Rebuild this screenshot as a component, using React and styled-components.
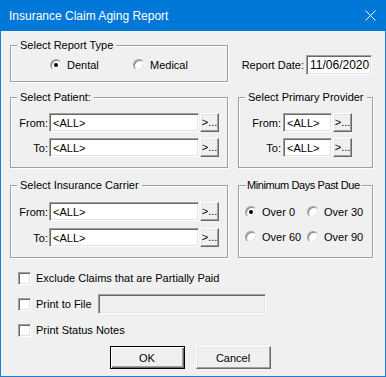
import React from "react";
import styled, { createGlobalStyle } from "styled-components";

const GlobalStyle = createGlobalStyle`
  html, body {
    margin: 0;
    padding: 0;
    background: #ffffff;
  }
  body {
    font-family: "Liberation Sans", Arial, sans-serif;
    font-size: 11px;
    color: #000;
  }
`;

const Window = styled.div`
  width: 386px;
  height: 377px;
  display: flex;
  flex-direction: column;
  overflow: hidden;
`;

const TitleBar = styled.div`
  height: 31px;
  flex: none;
  background: #0078d7;
  color: #fff;
  display: flex;
  align-items: center;
  justify-content: space-between;
  padding: 0 10px 0 9px;
  font-family: "Liberation Sans", Arial, sans-serif;
  font-size: 12px;
`;

const CloseIcon = () => (
  <svg width="11" height="11" viewBox="0 0 11 11">
    <path d="M0.5 0.5L10.5 10.5M10.5 0.5L0.5 10.5" stroke="#fff" strokeWidth="1" />
  </svg>
);

const Body = styled.div`
  flex: 1;
  background: #f0f0f0;
  border: 1px solid #1a7fd5;
  border-top: none;
  padding: 8px 12px 7px 9px;
  display: flex;
  flex-direction: column;
`;

const Row = styled.div`
  display: flex;
  align-items: ${(p) => p.$align || "stretch"};
  gap: 10px;
  margin-top: ${(p) => p.$mt || 0}px;
`;

const Group = styled.fieldset`
  margin: 0;
  min-width: 0;
  width: ${(p) => p.$w}px;
  box-sizing: border-box;
  padding: ${(p) => p.$pad};
  border: 1px solid #a0a0a0;
  box-shadow: 1px 1px 0 #fff, inset 1px 1px 0 #fff;
`;

const Legend = styled.legend`
  margin-left: ${(p) => (p.$ml != null ? p.$ml : 6)}px;
  padding: 0 ${(p) => (p.$px != null ? p.$px : 3)}px;
  line-height: 13px;
  height: 13px;
  white-space: nowrap;
  letter-spacing: ${(p) => p.$ls || 0}px;
  background: #f0f0f0;
`;

const RadioRow = styled.div`
  display: flex;
  padding-left: 39px;
`;

const RadioGrid = styled.div`
  display: grid;
  grid-template-columns: 62px 62px;
  row-gap: 12px;
  padding-left: 6px;
`;

const RadioItem = styled.label`
  display: inline-flex;
  align-items: center;
  gap: 5px;
  height: 13px;
  width: ${(p) => (p.$w ? `${p.$w}px` : "auto")};
  white-space: nowrap;
`;

const RadioCircle = styled.span`
  width: 12px;
  height: 12px;
  box-sizing: border-box;
  border-radius: 50%;
  background: #fff;
  border: 1px solid;
  border-color: #a0a0a0 #f4f4f4 #f4f4f4 #a0a0a0;
  box-shadow: inset 1px 1px 0 #8a8a8a, inset -1px -1px 0 #e3e3e3;
  display: flex;
  align-items: center;
  justify-content: center;
  flex: none;

  &::after {
    content: "";
    width: 4px;
    height: 4px;
    border-radius: 50%;
    background: ${(p) => (p.$on ? "#000" : "transparent")};
  }
`;

const DateBlock = styled.div`
  display: flex;
  align-items: center;
  gap: 2px;
  margin: 16px 1px 0 auto;
`;

const Field = styled.div`
  height: ${(p) => p.$h || 19}px;
  width: ${(p) => (p.$w ? `${p.$w}px` : "auto")};
  box-sizing: border-box;
  background: ${(p) => (p.$disabled ? "#f0f0f0" : "#fff")};
  border: 1px solid;
  border-color: #a0a0a0 #fff #fff #a0a0a0;
  box-shadow: inset 1px 1px 0 #696969, inset -1px -1px 0 #e3e3e3;
  padding: 0 2px 0 3px;
  display: flex;
  align-items: center;
  font-size: ${(p) => p.$fs || 11}px;
  white-space: nowrap;
  overflow: hidden;
`;

const PickerGrid = styled.div`
  display: grid;
  grid-template-columns: ${(p) => p.$label}px ${(p) => p.$input}px 20px;
  row-gap: ${(p) => p.$gap}px;
  align-items: center;
`;

const PickLabel = styled.span`
  justify-self: end;
  padding-right: ${(p) => p.$pr || 0}px;
`;

const RaisedButton = styled.button`
  font-family: inherit;
  font-size: 11px;
  color: #000;
  background: #f0f0f0;
  box-sizing: border-box;
  padding: 0;
  margin: 0;
  cursor: pointer;
  border: 1px solid;
  border-color: #fff #696969 #696969 #fff;
  box-shadow: inset -1px -1px 0 #a0a0a0, inset 1px 1px 0 #e3e3e3;
`;

const DotsButton = styled(RaisedButton)`
  width: 19px;
  height: 19px;
  justify-self: end;
  display: flex;
  align-items: center;
  justify-content: center;
  padding-bottom: 1px;
`;

const Checks = styled.div`
  display: flex;
  flex-direction: column;
  gap: 6px;
  margin-top: 10px;
  padding-left: 8px;
`;

const CheckRow = styled.label`
  display: flex;
  align-items: center;
  height: 20px;
  gap: 5px;
`;

const CheckBox = styled.span`
  width: 13px;
  height: 13px;
  box-sizing: border-box;
  background: #fff;
  border: 1px solid;
  border-color: #a0a0a0 #fff #fff #a0a0a0;
  box-shadow: inset 1px 1px 0 #696969, inset -1px -1px 0 #e3e3e3;
  flex: none;
`;

const FileField = styled(Field)`
  margin-left: 1px;
`;

const Actions = styled.div`
  display: flex;
  justify-content: center;
  gap: 11px;
  margin: 6px 3px 0 0;
`;

const DialogButton = styled(RaisedButton)`
  width: 75px;
  height: 23px;
  ${(p) =>
    p.$default &&
    `
    border: 1px solid #000;
    box-shadow: inset 1px 1px 0 #fff, inset -1px -1px 0 #696969, inset -2px -2px 0 #a0a0a0;
  `}
`;

const Picker = ({ label, input, pr, gap }) => (
  <PickerGrid $label={label} $input={input} $gap={gap}>
    <PickLabel $pr={pr}>From:</PickLabel>
    <Field>&lt;ALL&gt;</Field>
    <DotsButton>&gt;...</DotsButton>
    <PickLabel $pr={pr}>To:</PickLabel>
    <Field>&lt;ALL&gt;</Field>
    <DotsButton>&gt;...</DotsButton>
  </PickerGrid>
);

const Radio = ({ on, w, children }) => (
  <RadioItem $w={w}>
    <RadioCircle $on={on} />
    <span>{children}</span>
  </RadioItem>
);

const App = () => (
  <>
    <GlobalStyle />
    <Window>
      <TitleBar>
        <span>Insurance Claim Aging Report</span>
        <CloseIcon />
      </TitleBar>
      <Body>
        <Row $align="flex-start">
          <Group $w={218} $pad="6px 0 10px 0">
            <Legend>Select Report Type</Legend>
            <RadioRow>
              <Radio on w={83}>Dental</Radio>
              <Radio>Medical</Radio>
            </RadioRow>
          </Group>
          <DateBlock>
            <span>Report Date:</span>
            <Field $w={66} $h={20} $fs={12}>11/06/2020</Field>
          </DateBlock>
        </Row>

        <Row $mt={9}>
          <Group $w={218} $pad="9px 0 10px 0">
            <Legend>Select Patient:</Legend>
            <Picker label={38} input={150} pr={1} gap={6} />
          </Group>
          <Group $w={135} $pad="9px 0 10px 0">
            <Legend>Select Primary Provider</Legend>
            <Picker label={44} input={49} pr={2} gap={6} />
          </Group>
        </Row>

        <Row $mt={11}>
          <Group $w={218} $pad="10px 0 10px 0">
            <Legend>Select Insurance Carrier</Legend>
            <Picker label={38} input={150} pr={1} gap={7} />
          </Group>
          <Group $w={135} $pad="13px 0 10px 0">
            <Legend $ml={7} $px={1} $ls={-0.4}>Minimum Days Past Due</Legend>
            <RadioGrid>
              <Radio on>Over 0</Radio>
              <Radio>Over 30</Radio>
              <Radio>Over 60</Radio>
              <Radio>Over 90</Radio>
            </RadioGrid>
          </Group>
        </Row>

        <Checks>
          <CheckRow>
            <CheckBox />
            <span>Exclude Claims that are Partially Paid</span>
          </CheckRow>
          <CheckRow>
            <CheckBox />
            <span>Print to File</span>
            <FileField $w={168} $h={20} $disabled />
          </CheckRow>
          <CheckRow>
            <CheckBox />
            <span>Print Status Notes</span>
          </CheckRow>
        </Checks>

        <Actions>
          <DialogButton $default>OK</DialogButton>
          <DialogButton>Cancel</DialogButton>
        </Actions>
      </Body>
    </Window>
  </>
);

export default App;
